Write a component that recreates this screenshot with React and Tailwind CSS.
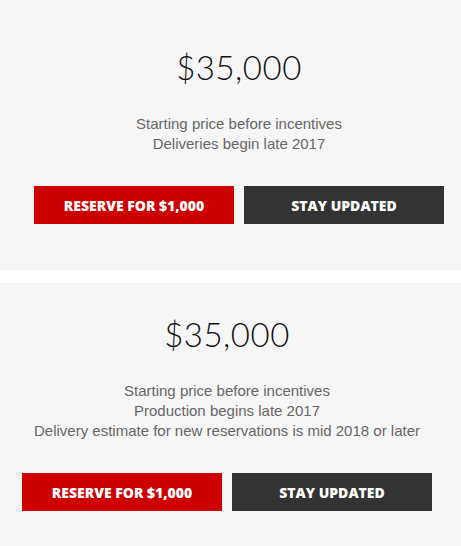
const PriceCard = ({ lines, shift }) => {
    return (
        <div className={`bg-[#f6f6f6] flex flex-col items-center ${shift}`}>
            <h2 className="font-['Lato',sans-serif] font-light text-[33px] leading-none text-[#111] tracking-[0.5px]">
                $35,000
            </h2>
            <div className="mt-[30px] font-['Liberation_Sans',Arial,sans-serif] text-[15px] leading-[20px] text-[#666] text-center">
                {lines.map((line) => (
                    <p key={line}>{line}</p>
                ))}
            </div>
            <div className="mt-[32px] flex gap-[10px]">
                <button className="w-[200px] h-[38px] bg-[#cc0000] text-white font-['Open_Sans',sans-serif] font-extrabold text-[14px] uppercase">
                    Reserve for $1,000
                </button>
                <button className="w-[200px] h-[38px] bg-[#333333] text-white font-['Open_Sans',sans-serif] font-extrabold text-[14px] uppercase">
                    Stay Updated
                </button>
            </div>
        </div>
    );
};

export default function App() {
    return (
        <div className="w-[461px] h-[546px] bg-white flex flex-col gap-[13px] overflow-hidden">
            <PriceCard
                shift="h-[270px] pt-[51px] pl-[17px]"
                lines={["Starting price before incentives", "Deliveries begin late 2017"]}
            />
            <PriceCard
                shift="flex-1 pt-[35px] pr-[7px]"
                lines={[
                    "Starting price before incentives",
                    "Production begins late 2017",
                    "Delivery estimate for new reservations is mid 2018 or later",
                ]}
            />
        </div>
    );
}
